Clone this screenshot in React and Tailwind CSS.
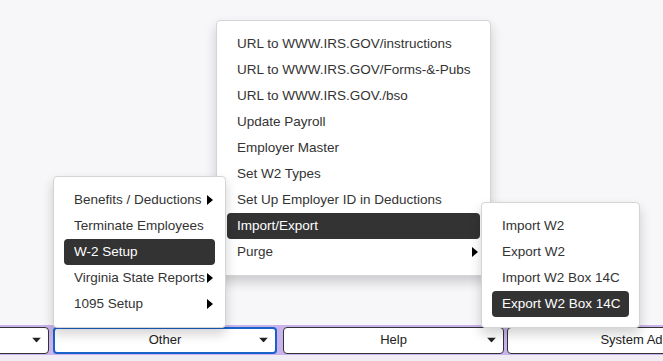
import React from "react";

const font = { fontFamily: '"Liberation Sans", Arial, sans-serif' };

function RightArrow() {
  return (
    <svg width="6" height="10" viewBox="0 0 6 10" className="shrink-0">
      <polygon points="0,0 6,5 0,10" fill="#000" />
    </svg>
  );
}

function Caret() {
  return (
    <svg width="9" height="5" viewBox="0 0 9 5" className="absolute right-[7px] top-1/2 -translate-y-1/2">
      <polygon points="0,0 9,0 4.5,5" fill="#222" />
    </svg>
  );
}

function Item({ label, active, arrow }) {
  return (
    <div
      className={
        "h-[26px] flex items-center pl-[10px] pr-[2px] rounded-[4px] whitespace-nowrap " +
        (active ? "bg-[#333333] text-white" : "text-[#333333]")
      }
    >
      <span className="flex-1 overflow-hidden">{label}</span>
      {arrow && <RightArrow />}
    </div>
  );
}

function Menu({ className, items }) {
  return (
    <div
      className={
        "absolute bg-white border border-[#d4d4d4] rounded-[4px] p-[10px] shadow-[0_6px_12px_rgba(0,0,0,0.18)] text-[13.5px] " +
        className
      }
    >
      {items.map((it) => (
        <Item key={it.label} {...it} />
      ))}
    </div>
  );
}

export default function App() {
  return (
    <div style={font} className="relative w-[663px] h-[361px] overflow-hidden bg-[#f7f6f9] flex flex-col">
      <div className="flex-1" />
      <div className="h-[30px] bg-[#c8b3ec] flex items-center gap-0">
        <div className="relative ml-[-12px] w-[61px] h-[27px] bg-white border border-[#333] rounded-[4px] shrink-0">
          <Caret />
        </div>
        <div className="relative ml-[4px] w-[224px] h-[27px] bg-white border-2 border-[#1a62c9] rounded-[4px] shrink-0 flex items-center justify-center text-[13px] text-[#222]">
          Other
          <Caret />
        </div>
        <div className="relative ml-[6px] w-[221px] h-[27px] bg-white border border-[#333] rounded-[4px] shrink-0 flex items-center justify-center text-[13px] text-[#222]">
          Help
          <Caret />
        </div>
        <div className="relative ml-[3px] w-[270px] h-[27px] bg-white border border-[#333] rounded-[4px] shrink-0 flex items-center justify-center text-[13px] text-[#222]">
          System Admin
          <Caret />
        </div>
      </div>
      <div className="h-[6px] bg-[#efedf3]" />

      <Menu
        className="left-[216px] top-[20px] w-[275px]"
        items={[
          { label: "URL to WWW.IRS.GOV/instructions" },
          { label: "URL to WWW.IRS.GOV/Forms-&-Pubs" },
          { label: "URL to WWW.IRS.GOV./bso" },
          { label: "Update Payroll" },
          { label: "Employer Master" },
          { label: "Set W2 Types" },
          { label: "Set Up Employer ID in Deductions" },
          { label: "Import/Export", active: true },
          { label: "Purge", arrow: true },
        ]}
      />
      <Menu
        className="left-[53px] top-[176px] w-[173px]"
        items={[
          { label: "Benefits / Deductions", arrow: true },
          { label: "Terminate Employees" },
          { label: "W-2 Setup", active: true },
          { label: "Virginia State Reports", arrow: true },
          { label: "1095 Setup", arrow: true },
        ]}
      />
      <Menu
        className="left-[481px] top-[202px] w-[159px]"
        items={[
          { label: "Import W2" },
          { label: "Export W2" },
          { label: "Import W2 Box 14C" },
          { label: "Export W2 Box 14C", active: true },
        ]}
      />
    </div>
  );
}
